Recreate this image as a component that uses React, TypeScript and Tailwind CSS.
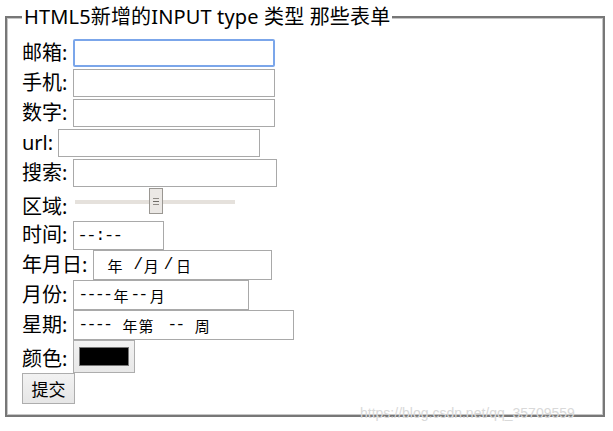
const lbl =
  "font-['Noto_Sans','Noto_Sans_CJK_SC',sans-serif] text-[20px] leading-6 whitespace-pre text-black";
const box = "border border-[#a9a9a9] bg-white";
const mono =
  "inline-block font-['Liberation_Mono',monospace] text-[16px] tracking-[-1.4px] leading-none whitespace-pre text-black";
const cjk = "inline-block font-['Noto_Sans_CJK_SC',sans-serif] text-[15px] leading-none text-black";

export default function App() {
  return (
    <div className="relative w-[613px] h-[431px] bg-white pt-[5px] pl-[5px]">
      <fieldset className="w-[600px] border-2 border-[#777777] shadow-[inset_0_0_0_1px_#c6c6c6] px-[15px] pt-[9px] pb-[11px]">
        <legend className={`${lbl} px-[2px] bg-white tracking-[0.15px]`}>HTML5新增的INPUT type 类型 那些表单</legend>

        <div className="flex flex-col">
          <div className="flex h-[30px] items-center">
            <span className={lbl}>邮箱: </span>
            <input type="email" className="w-[202px] h-[28px] border-2 border-[#7ba6ea] rounded-[2px] bg-white" />
          </div>
          <div className="flex h-[30px] items-center">
            <span className={lbl}>手机: </span>
            <input type="tel" className={`w-[202px] h-[28px] ${box}`} />
          </div>
          <div className="flex h-[30px] items-center">
            <span className={lbl}>数字: </span>
            <input type="text" className={`w-[202px] h-[28px] ${box}`} />
          </div>
          <div className="flex h-[30px] items-center">
            <span className={lbl}>url: </span>
            <input type="url" className={`w-[202px] h-[28px] ${box}`} />
          </div>
          <div className="flex h-[30px] items-center">
            <span className={lbl}>搜索: </span>
            <input type="search" className={`w-[204px] h-[28px] ${box}`} />
          </div>

          {/* range */}
          <div className="flex h-[32px] items-end">
            <span className={`${lbl} mb-[1px]`}>区域: </span>
            <div className="relative self-start ml-[2px] w-[160px] h-[26px] flex items-center">
              <div className="w-full h-[4px] bg-[#e5e1dc] mt-[1px]" />
              <div className="absolute left-[74px] top-0 w-[14px] h-[26px] border border-[#9a9792] bg-[#ebe8e5] flex flex-col items-center justify-center gap-[2px]">
                <div className="w-[6px] h-px bg-[#8e8a85]" />
                <div className="w-[6px] h-px bg-[#6f6b66]" />
                <div className="w-[6px] h-px bg-[#8e8a85]" />
              </div>
            </div>
          </div>

          <div className="flex h-[30px] items-center">
            <span className={lbl}>时间: </span>
            <div className={`w-[91px] h-[29px] ${box} flex items-center pl-[4px]`}>
              <span className={`${mono} text-[17px]`}>--:--</span>
            </div>
          </div>
          <div className="flex h-[30px] items-center">
            <span className={lbl}>年月日: </span>
            <div className={`w-[179px] h-[30px] ${box} flex items-center`}>
              <span className={`${cjk} ml-[14px]`}>年</span>
              <span className={`${mono} ml-[11px]`}>/</span>
              <span className={`${cjk} ml-[2px]`}>月</span>
              <span className={`${mono} ml-[5px]`}>/</span>
              <span className={`${cjk} ml-[4px]`}>日</span>
            </div>
          </div>
          <div className="flex h-[30px] items-center">
            <span className={lbl}>月份: </span>
            <div className={`w-[176px] h-[30px] ${box} flex items-center`}>
              <span className={`${mono} ml-[5px]`}>----</span>
              <span className={`${cjk} ml-[2px]`}>年</span>
              <span className={`${mono} ml-[2px]`}>--</span>
              <span className={`${cjk} ml-[3px]`}>月</span>
            </div>
          </div>
          <div className="flex h-[30px] items-center">
            <span className={lbl}>星期: </span>
            <div className={`w-[221px] h-[30px] ${box} flex items-center`}>
              <span className={`${mono} ml-[5px]`}>----</span>
              <span className={`${cjk} ml-[11px]`}>年</span>
              <span className={`${cjk} ml-[1px]`}>第</span>
              <span className={`${mono} ml-[14px]`}>--</span>
              <span className={`${cjk} ml-[11px]`}>周</span>
            </div>
          </div>

          <div className="flex h-[33px] items-center">
            <span className={`${lbl} mt-[4px]`}>颜色: </span>
            <div className="w-[62px] h-[33px] border border-[#adadad] bg-gradient-to-b from-[#f2f2f2] to-[#e8e8e8] pl-[5px] pt-[6px]">
              <div className="w-[50px] h-[19px] bg-black border border-[#777777]" />
            </div>
          </div>
          <div className="flex h-[31px] items-center">
            <button className="w-[53px] h-[31px] border border-[#adadad] bg-gradient-to-b from-[#f2f2f2] to-[#e6e6e6] font-['Noto_Sans_CJK_SC',sans-serif] text-[17px] leading-none text-black">
              提交
            </button>
          </div>
        </div>
      </fieldset>

      <span className="absolute left-[360px] top-[403px] font-['Liberation_Sans',Arial,sans-serif] text-[14px] text-[#d9d9d9]">
        https://blog.csdn.net/qq_35709559
      </span>
    </div>
  );
}
